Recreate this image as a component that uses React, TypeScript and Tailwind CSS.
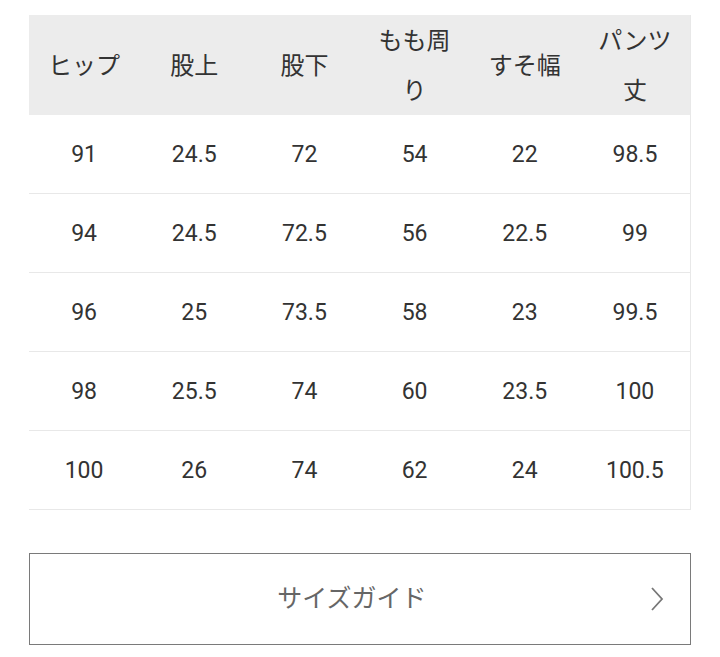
const HEADERS = ['ヒップ', '股上', '股下', 'もも周り', 'すそ幅', 'パンツ丈']

const ROWS = [
  ['91', '24.5', '72', '54', '22', '98.5'],
  ['94', '24.5', '72.5', '56', '22.5', '99'],
  ['96', '25', '73.5', '58', '23', '99.5'],
  ['98', '25.5', '74', '60', '23.5', '100'],
  ['100', '26', '74', '62', '24', '100.5'],
]

export default function App() {
  return (
    <div
      className="min-h-screen bg-white pt-[15px] text-[#333]"
      style={{ fontFamily: "Roboto, 'Noto Sans CJK JP', sans-serif" }}
    >
      <div className="ml-[29px] w-[662px]">
        {/* Size table */}
        <div className="border-r border-[#e8e8e8]">
          <div className="grid h-[100px] grid-cols-6 bg-[#ececec]">
            {HEADERS.map((h) => (
              <div
                key={h}
                className="flex items-center justify-center px-3 pt-[1px] text-center text-[24px] leading-[50px]"
              >
                {h}
              </div>
            ))}
          </div>
          {ROWS.map((row, i) => (
            <div key={i} className="grid h-[79px] grid-cols-6 border-b border-[#e8e8e8]">
              {row.map((v, j) => (
                <div key={j} className="flex items-center justify-center pt-[3px] text-[23px]">
                  {v}
                </div>
              ))}
            </div>
          ))}
        </div>

        {/* Size guide button */}
        <button className="relative mt-[43px] flex h-[92px] w-full items-center justify-center border border-[#7a7a7a] bg-white pr-[16px] text-[25px] text-[#666]">
          サイズガイド
          <svg
            className="absolute right-[26px] top-1/2 -translate-y-1/2"
            width="14"
            height="26"
            viewBox="0 0 14 26"
            fill="none"
            stroke="#777"
            strokeWidth="1.8"
          >
            <path d="M2 2 L12 13 L2 24" />
          </svg>
        </button>
      </div>
    </div>
  )
}
